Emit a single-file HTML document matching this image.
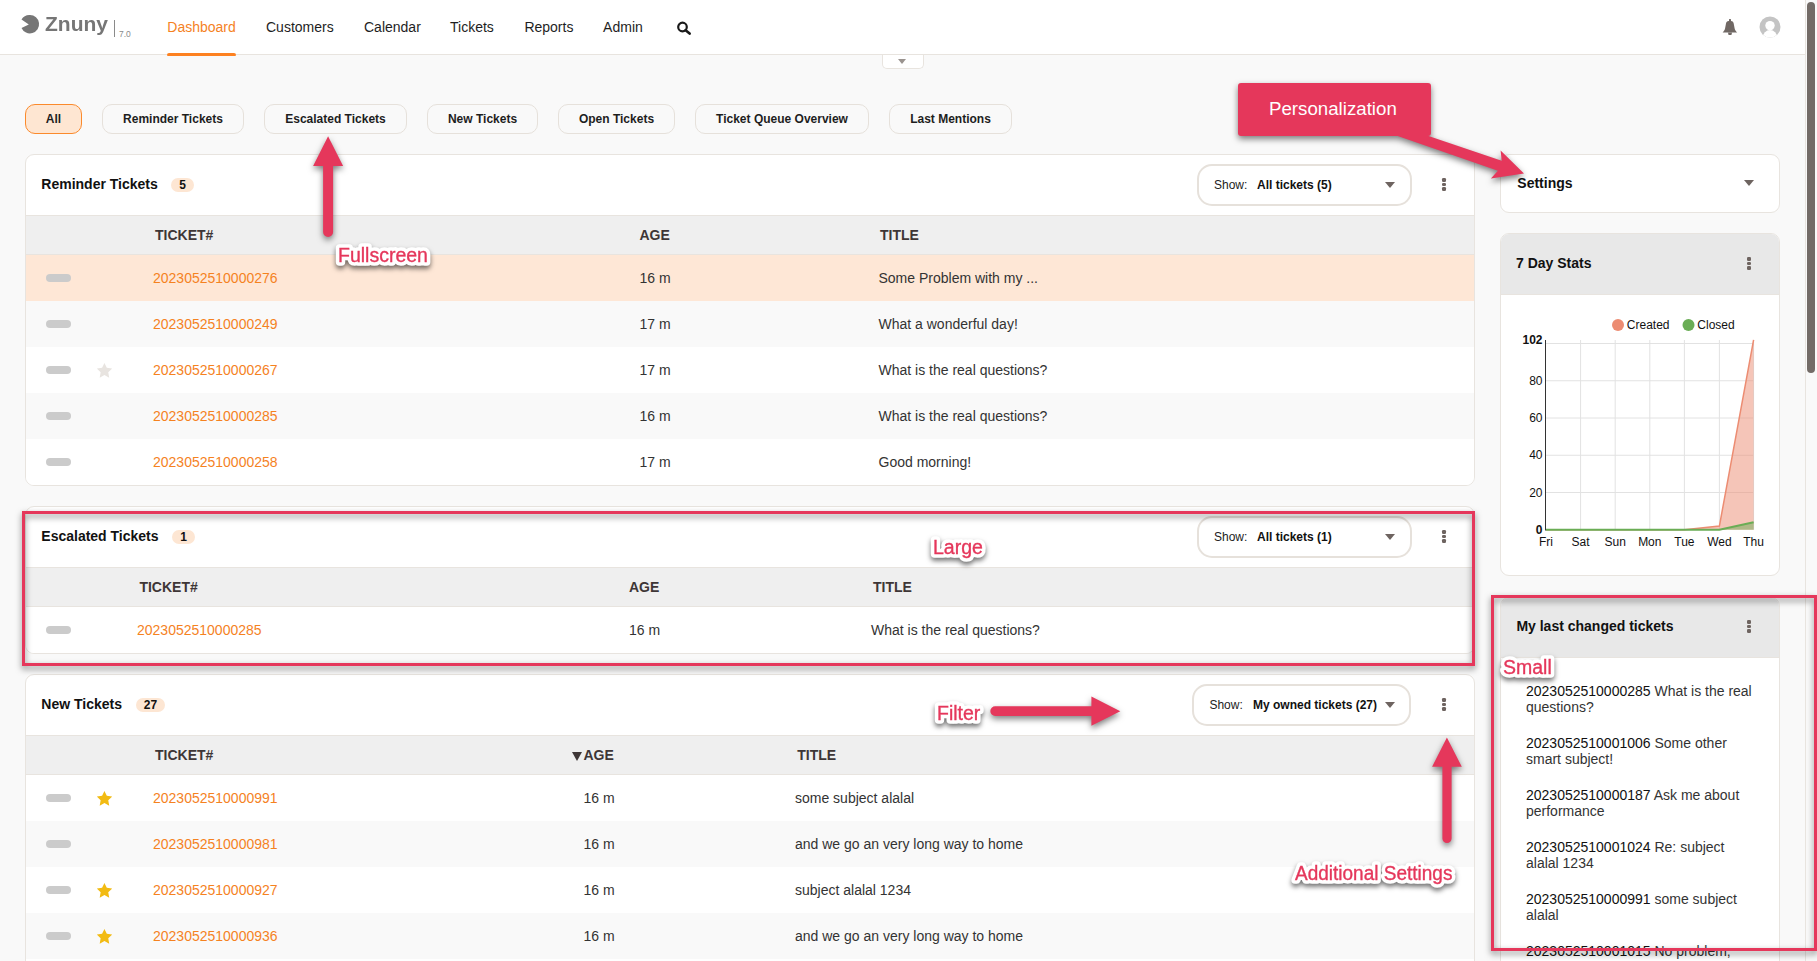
<!DOCTYPE html>
<html><head><meta charset="utf-8">
<style>
*{margin:0;padding:0;box-sizing:border-box}
html,body{width:1817px;height:961px;overflow:hidden;background:#f9f9f9;font-family:"Liberation Sans",sans-serif;color:#222}
.a{position:absolute}
.t{position:absolute;white-space:nowrap;line-height:1}
.pill{position:absolute;top:104px;height:30px;border:1px solid #e6e1db;border-radius:10px;font-size:12px;font-weight:bold;color:#1e1e1e;line-height:28px;text-align:center;background:#f9f9f9;white-space:nowrap}
.box{position:absolute;background:#fff;border:1px solid #e8e4df;border-radius:9px;overflow:hidden}
.badge{position:absolute;height:14px;border-radius:7px;background:#fde6d3;font-size:12px;font-weight:bold;line-height:14px;text-align:center;color:#111}
.row{position:absolute;height:46px}
.ind{position:absolute;width:25px;height:8px;border-radius:4px;background:#cbcbcb}
.dd{position:absolute;height:42px;border:2px solid #e6e1db;border-radius:15px;background:#fff}
.dots{position:absolute;width:4px;height:13px}
.dots i{position:absolute;left:0;width:4px;height:3.6px;border-radius:1.3px;background:#6e6460}
.tri{position:absolute;width:0;height:0;border-left:5.5px solid transparent;border-right:5.5px solid transparent;border-top:6px solid #6e6460}
</style></head><body>
<div class="a" style="left:0;top:0;width:1805px;height:55px;background:#fff;border-bottom:1px solid #e8e4df"></div>
<svg class="a" style="left:0;top:0" width="140" height="54">
<path d="M30,15 A9.2,9.2 0 1 1 21.5,28 L28.8,24.6 L21.5,19.5 A9.2,9.2 0 0 1 30,15 Z" fill="#767676"/>
</svg>
<div class="t" style="left:44.5px;top:13.5px;font-size:20px;font-weight:bold;color:#767676;transform:scaleX(1.05);transform-origin:0 0;letter-spacing:0px">Znuny</div>
<div class="a" style="left:114px;top:20px;width:1px;height:17px;background:#8a8a8a"></div>
<div class="t " style="left:119px;top:29.80px;font-size:8.5px;color:#8a8a8a">7.0</div>
<div class="t " style="left:167.3px;top:19.85px;font-size:14px;color:#f5821f">Dashboard</div>
<div class="t " style="left:266px;top:19.85px;font-size:14px;color:#1e1e1e">Customers</div>
<div class="t " style="left:364px;top:19.85px;font-size:14px;color:#1e1e1e">Calendar</div>
<div class="t " style="left:450px;top:19.85px;font-size:14px;color:#1e1e1e">Tickets</div>
<div class="t " style="left:524.4px;top:19.85px;font-size:14px;color:#1e1e1e">Reports</div>
<div class="t " style="left:603.1px;top:19.85px;font-size:14px;color:#1e1e1e">Admin</div>
<div class="a" style="left:167px;top:53px;width:69px;height:3px;border-radius:2px;background:#fd8120;border-radius:2px 2px 1px 1px"></div>
<svg class="a" style="left:676px;top:21px" width="16" height="14" viewBox="0 0 16 14">
<circle cx="6.5" cy="6" r="4.3" fill="none" stroke="#1a1a1a" stroke-width="2.2"/>
<line x1="9.6" y1="9.2" x2="13.6" y2="12.6" stroke="#1a1a1a" stroke-width="2.6" stroke-linecap="round"/>
</svg>
<svg class="a" style="left:1720px;top:17px" width="20" height="20" viewBox="0 0 20 20">
<path d="M9,2.6 C9,2 9.5,1.9 10,1.9 C10.5,1.9 11,2 11,2.6 L11,4 C12.7,4.1 13.4,4.9 13.7,6.6 L14.6,11.3 C14.9,13 15.8,14.3 17.1,15.6 L2.6,15.6 C3.9,14.3 4.8,13 5.1,11.3 L6,6.6 C6.3,4.9 7,4.1 8.7,4 L9,4 Z" fill="#706864"/>
<path d="M7.9,15.4 L12.1,15.4 L11.4,18 L8.6,18 Z" fill="#706864"/>
</svg>
<svg class="a" style="left:1758px;top:15px" width="24" height="24" viewBox="0 0 24 24">
<defs><clipPath id="avc"><circle cx="12" cy="12" r="10.5"/></clipPath></defs>
<circle cx="12" cy="12" r="10.5" fill="#c4c4c4"/>
<g clip-path="url(#avc)"><circle cx="12" cy="10.6" r="4.7" fill="#fff"/><ellipse cx="12" cy="22.5" rx="7.2" ry="7.6" fill="#fff"/></g>
</svg>
<div class="a" style="left:882px;top:55px;width:42px;height:14px;background:#fff;border:1px solid #e8e4df;border-top:none;border-radius:0 0 5px 5px"></div>
<div class="tri" style="left:898px;top:59px;border-left-width:4.5px;border-right-width:4.5px;border-top:5.5px solid #9a938f"></div>
<div class="pill" style="left:25px;width:57px;background:#fee6d2;border-color:#fb8a2c;">All</div>
<div class="pill" style="left:102px;width:142px;">Reminder Tickets</div>
<div class="pill" style="left:264px;width:143px;">Escalated Tickets</div>
<div class="pill" style="left:427px;width:111px;">New Tickets</div>
<div class="pill" style="left:558px;width:117px;">Open Tickets</div>
<div class="pill" style="left:695px;width:174px;">Ticket Queue Overview</div>
<div class="pill" style="left:889px;width:123px;">Last Mentions</div>
<div class="box" style="left:25px;top:154px;width:1450px;height:332px"><div class="a" style="left:-26px;top:-155px;width:1817px;height:961px">
<div class="t " style="left:41.3px;top:176.85px;font-size:14px;font-weight:bold;color:#111">Reminder Tickets</div>
<div class="badge" style="left:171px;top:178px;width:23px">5</div>
<div class="dd" style="left:1197px;top:164px;width:215px"></div>
<div class="t " style="left:1214px;top:178.84px;font-size:12px;color:#222">Show:</div>
<div class="t " style="left:1257px;top:178.84px;font-size:12px;font-weight:bold;color:#111">All tickets (5)</div>
<div class="tri" style="left:1384.5px;top:182px"></div>
<div class="dots" style="left:1442px;top:178px"><i style="top:0"></i><i style="top:4.7px"></i><i style="top:9.4px"></i></div>
<div class="a" style="left:26px;top:215px;width:1448px;height:40px;background:#efefef;border-top:1px solid #e8e4df;border-bottom:1px solid #e8e4df"></div>
<div class="t " style="left:155px;top:228.15px;font-size:14px;font-weight:bold;color:#3e3636">TICKET#</div>
<div class="t " style="left:639.5px;top:228.15px;font-size:14px;font-weight:bold;color:#3e3636">AGE</div>
<div class="t " style="left:880px;top:228.15px;font-size:14px;font-weight:bold;color:#3e3636">TITLE</div>
<div class="row" style="left:26px;top:255px;width:1448px;background:#fee7d6"></div>
<div class="ind" style="left:46px;top:274px"></div>
<div class="t " style="left:153px;top:270.95px;font-size:14px;color:#f5821f">2023052510000276</div>
<div class="t " style="left:639.5px;top:270.95px;font-size:14px;color:#333">16 m</div>
<div class="t " style="left:878.5px;top:270.95px;font-size:14px;color:#333">Some Problem with my ...</div>
<div class="row" style="left:26px;top:301px;width:1448px;background:#f9f9f9"></div>
<div class="ind" style="left:46px;top:320px"></div>
<div class="t " style="left:153px;top:316.95px;font-size:14px;color:#f5821f">2023052510000249</div>
<div class="t " style="left:639.5px;top:316.95px;font-size:14px;color:#333">17 m</div>
<div class="t " style="left:878.5px;top:316.95px;font-size:14px;color:#333">What a wonderful day!</div>
<div class="row" style="left:26px;top:347px;width:1448px;background:#fff"></div>
<div class="ind" style="left:46px;top:366px"></div>
<svg class="a" style="left:96.8px;top:362.5px" width="15" height="15" viewBox="0 0 15 15" style="overflow:visible"><path d="M7.45,0.00 L9.80,4.86 L15.15,5.60 L11.25,9.34 L12.21,14.65 L7.45,12.10 L2.69,14.65 L3.65,9.34 L-0.25,5.60 L5.10,4.86 Z" fill="#e8e4e0"/></svg>
<div class="t " style="left:153px;top:362.95px;font-size:14px;color:#f5821f">2023052510000267</div>
<div class="t " style="left:639.5px;top:362.95px;font-size:14px;color:#333">17 m</div>
<div class="t " style="left:878.5px;top:362.95px;font-size:14px;color:#333">What is the real questions?</div>
<div class="row" style="left:26px;top:393px;width:1448px;background:#f9f9f9"></div>
<div class="ind" style="left:46px;top:412px"></div>
<div class="t " style="left:153px;top:408.95px;font-size:14px;color:#f5821f">2023052510000285</div>
<div class="t " style="left:639.5px;top:408.95px;font-size:14px;color:#333">16 m</div>
<div class="t " style="left:878.5px;top:408.95px;font-size:14px;color:#333">What is the real questions?</div>
<div class="row" style="left:26px;top:439px;width:1448px;background:#fff"></div>
<div class="ind" style="left:46px;top:458px"></div>
<div class="t " style="left:153px;top:454.95px;font-size:14px;color:#f5821f">2023052510000258</div>
<div class="t " style="left:639.5px;top:454.95px;font-size:14px;color:#333">17 m</div>
<div class="t " style="left:878.5px;top:454.95px;font-size:14px;color:#333">Good morning!</div>
</div></div>
<div class="box" style="left:25px;top:506px;width:1450px;height:148px"><div class="a" style="left:-26px;top:-507px;width:1817px;height:961px">
<div class="t " style="left:41.3px;top:528.85px;font-size:14px;font-weight:bold;color:#111">Escalated Tickets</div>
<div class="badge" style="left:172px;top:530px;width:23px">1</div>
<div class="dd" style="left:1197px;top:516px;width:215px"></div>
<div class="t " style="left:1214px;top:530.84px;font-size:12px;color:#222">Show:</div>
<div class="t " style="left:1257px;top:530.84px;font-size:12px;font-weight:bold;color:#111">All tickets (1)</div>
<div class="tri" style="left:1384.5px;top:534px"></div>
<div class="dots" style="left:1442px;top:530px"><i style="top:0"></i><i style="top:4.7px"></i><i style="top:9.4px"></i></div>
<div class="a" style="left:26px;top:567px;width:1448px;height:40px;background:#efefef;border-top:1px solid #e8e4df;border-bottom:1px solid #e8e4df"></div>
<div class="t " style="left:139.4px;top:580.15px;font-size:14px;font-weight:bold;color:#3e3636">TICKET#</div>
<div class="t " style="left:629px;top:580.15px;font-size:14px;font-weight:bold;color:#3e3636">AGE</div>
<div class="t " style="left:873px;top:580.15px;font-size:14px;font-weight:bold;color:#3e3636">TITLE</div>
<div class="row" style="left:26px;top:607px;width:1448px;background:#fff"></div>
<div class="ind" style="left:46px;top:626px"></div>
<div class="t " style="left:137px;top:622.95px;font-size:14px;color:#f5821f">2023052510000285</div>
<div class="t " style="left:629px;top:622.95px;font-size:14px;color:#333">16 m</div>
<div class="t " style="left:871px;top:622.95px;font-size:14px;color:#333">What is the real questions?</div>
</div></div>
<div class="box" style="left:25px;top:674px;width:1450px;height:332px"><div class="a" style="left:-26px;top:-675px;width:1817px;height:961px">
<div class="t " style="left:41.3px;top:696.85px;font-size:14px;font-weight:bold;color:#111">New Tickets</div>
<div class="badge" style="left:136px;top:698px;width:29px">27</div>
<div class="dd" style="left:1192px;top:684px;width:219px"></div>
<div class="t " style="left:1209.4px;top:698.84px;font-size:12px;color:#222">Show:</div>
<div class="t " style="left:1253px;top:698.84px;font-size:12px;font-weight:bold;color:#111">My owned tickets (27)</div>
<div class="tri" style="left:1384.7px;top:702px"></div>
<div class="dots" style="left:1442px;top:698px"><i style="top:0"></i><i style="top:4.7px"></i><i style="top:9.4px"></i></div>
<div class="a" style="left:26px;top:735px;width:1448px;height:40px;background:#efefef;border-top:1px solid #e8e4df;border-bottom:1px solid #e8e4df"></div>
<div class="t " style="left:155px;top:748.15px;font-size:14px;font-weight:bold;color:#3e3636">TICKET#</div>
<div class="t " style="left:583.5px;top:748.15px;font-size:14px;font-weight:bold;color:#3e3636">AGE</div>
<div class="t " style="left:797.3px;top:748.15px;font-size:14px;font-weight:bold;color:#3e3636">TITLE</div>
<div class="row" style="left:26px;top:775px;width:1448px;background:#fff"></div>
<div class="ind" style="left:46px;top:794px"></div>
<svg class="a" style="left:96.8px;top:790.5px" width="15" height="15" viewBox="0 0 15 15" style="overflow:visible"><path d="M7.45,0.00 L9.80,4.86 L15.15,5.60 L11.25,9.34 L12.21,14.65 L7.45,12.10 L2.69,14.65 L3.65,9.34 L-0.25,5.60 L5.10,4.86 Z" fill="#f2bb13"/></svg>
<div class="t " style="left:153px;top:790.95px;font-size:14px;color:#f5821f">2023052510000991</div>
<div class="t " style="left:583.5px;top:790.95px;font-size:14px;color:#333">16 m</div>
<div class="t " style="left:795px;top:790.95px;font-size:14px;color:#333">some subject alalal</div>
<div class="row" style="left:26px;top:821px;width:1448px;background:#f9f9f9"></div>
<div class="ind" style="left:46px;top:840px"></div>
<div class="t " style="left:153px;top:836.95px;font-size:14px;color:#f5821f">2023052510000981</div>
<div class="t " style="left:583.5px;top:836.95px;font-size:14px;color:#333">16 m</div>
<div class="t " style="left:795px;top:836.95px;font-size:14px;color:#333">and we go an very long way to home</div>
<div class="row" style="left:26px;top:867px;width:1448px;background:#fff"></div>
<div class="ind" style="left:46px;top:886px"></div>
<svg class="a" style="left:96.8px;top:882.5px" width="15" height="15" viewBox="0 0 15 15" style="overflow:visible"><path d="M7.45,0.00 L9.80,4.86 L15.15,5.60 L11.25,9.34 L12.21,14.65 L7.45,12.10 L2.69,14.65 L3.65,9.34 L-0.25,5.60 L5.10,4.86 Z" fill="#f2bb13"/></svg>
<div class="t " style="left:153px;top:882.95px;font-size:14px;color:#f5821f">2023052510000927</div>
<div class="t " style="left:583.5px;top:882.95px;font-size:14px;color:#333">16 m</div>
<div class="t " style="left:795px;top:882.95px;font-size:14px;color:#333">subject alalal 1234</div>
<div class="row" style="left:26px;top:913px;width:1448px;background:#f9f9f9"></div>
<div class="ind" style="left:46px;top:932px"></div>
<svg class="a" style="left:96.8px;top:928.5px" width="15" height="15" viewBox="0 0 15 15" style="overflow:visible"><path d="M7.45,0.00 L9.80,4.86 L15.15,5.60 L11.25,9.34 L12.21,14.65 L7.45,12.10 L2.69,14.65 L3.65,9.34 L-0.25,5.60 L5.10,4.86 Z" fill="#f2bb13"/></svg>
<div class="t " style="left:153px;top:928.95px;font-size:14px;color:#f5821f">2023052510000936</div>
<div class="t " style="left:583.5px;top:928.95px;font-size:14px;color:#333">16 m</div>
<div class="t " style="left:795px;top:928.95px;font-size:14px;color:#333">and we go an very long way to home</div>
<div class="row" style="left:26px;top:959px;width:1448px;background:#fff"></div>
<div class="ind" style="left:46px;top:978px"></div>
<div class="t " style="left:153px;top:974.95px;font-size:14px;color:#f5821f">2023052510000950</div>
<div class="t " style="left:583.5px;top:974.95px;font-size:14px;color:#333">16 m</div>
<div class="t " style="left:795px;top:974.95px;font-size:14px;color:#333">and we go an very long way to home</div>
</div></div>
<div class="tri" style="left:571.5px;top:751.5px;border-left-width:5px;border-right-width:5px;border-top:9px solid #3e3636"></div>
<div class="box" style="left:1500px;top:154px;width:280px;height:59px"></div>
<div class="t " style="left:1517.3px;top:176.15px;font-size:14px;font-weight:bold;color:#111">Settings</div>
<div class="tri" style="left:1743.5px;top:180px"></div>
<div class="box" style="left:1500px;top:233px;width:280px;height:343px"></div>
<div class="a" style="left:1501px;top:234px;width:278px;height:61px;background:#e8e8e8;border-bottom:1px solid #e8e4df;border-radius:8px 8px 0 0"></div>
<div class="t " style="left:1516px;top:255.95px;font-size:14px;font-weight:bold;color:#111">7 Day Stats</div>
<div class="dots" style="left:1747px;top:257px"><i style="top:0"></i><i style="top:4.7px"></i><i style="top:9.4px"></i></div>
<div class="box" style="left:1500px;top:597px;width:280px;height:400px"></div>
<div class="a" style="left:1501px;top:598px;width:278px;height:60px;background:#e8e8e8;border-bottom:1px solid #e8e4df;border-radius:8px 8px 0 0"></div>
<div class="t " style="left:1516.4px;top:618.75px;font-size:14px;font-weight:bold;color:#111">My last changed tickets</div>
<div class="dots" style="left:1746.6px;top:620px"><i style="top:0"></i><i style="top:4.7px"></i><i style="top:9.4px"></i></div>
<div class="t " style="left:1526px;top:684.15px;font-size:14px;color:#333"><span style="color:#111">2023052510000285</span> What is the real</div>
<div class="t " style="left:1526px;top:699.65px;font-size:14px;color:#333">questions?</div>
<div class="t " style="left:1526px;top:736.15px;font-size:14px;color:#333"><span style="color:#111">2023052510001006</span> Some other</div>
<div class="t " style="left:1526px;top:751.65px;font-size:14px;color:#333">smart subject!</div>
<div class="t " style="left:1526px;top:788.15px;font-size:14px;color:#333"><span style="color:#111">2023052510000187</span> Ask me about</div>
<div class="t " style="left:1526px;top:803.65px;font-size:14px;color:#333">performance</div>
<div class="t " style="left:1526px;top:840.15px;font-size:14px;color:#333"><span style="color:#111">2023052510001024</span> Re: subject</div>
<div class="t " style="left:1526px;top:855.65px;font-size:14px;color:#333">alalal 1234</div>
<div class="t " style="left:1526px;top:892.15px;font-size:14px;color:#333"><span style="color:#111">2023052510000991</span> some subject</div>
<div class="t " style="left:1526px;top:907.65px;font-size:14px;color:#333">alalal</div>
<div class="t " style="left:1526px;top:944.15px;font-size:14px;color:#333"><span style="color:#111">2023052510001015</span> No problem,</div>
<svg class="a" style="left:0;top:0" width="1817" height="961"><line x1="1546" y1="492.5" x2="1753.6" y2="492.5" stroke="#e2e2e2" stroke-width="1"/><line x1="1546" y1="455.25" x2="1753.6" y2="455.25" stroke="#e2e2e2" stroke-width="1"/><line x1="1546" y1="418.0" x2="1753.6" y2="418.0" stroke="#e2e2e2" stroke-width="1"/><line x1="1546" y1="380.75" x2="1753.6" y2="380.75" stroke="#e2e2e2" stroke-width="1"/><line x1="1546" y1="343.5" x2="1753.6" y2="343.5" stroke="#e2e2e2" stroke-width="1"/><line x1="1580.6" y1="340" x2="1580.6" y2="529.75" stroke="#e2e2e2" stroke-width="1"/><line x1="1615.2" y1="340" x2="1615.2" y2="529.75" stroke="#e2e2e2" stroke-width="1"/><line x1="1649.8" y1="340" x2="1649.8" y2="529.75" stroke="#e2e2e2" stroke-width="1"/><line x1="1684.4" y1="340" x2="1684.4" y2="529.75" stroke="#e2e2e2" stroke-width="1"/><line x1="1719.4" y1="340" x2="1719.4" y2="529.75" stroke="#e2e2e2" stroke-width="1"/><line x1="1753.6" y1="340" x2="1753.6" y2="529.75" stroke="#e2e2e2" stroke-width="1"/><polygon points="1546,529.75 1546,529.75 1580.6,529.75 1615.2,529.75 1649.8,529.75 1684.4,529.75 1719.4,526.025 1753.6,339.775 1753.6,529.75" fill="#ec8c72" fill-opacity="0.5"/><polygon points="1546,529.75 1546,529.75 1580.6,529.75 1615.2,529.75 1649.8,529.75 1684.4,529.75 1719.4,529.75 1753.6,522.3 1753.6,529.75" fill="#6aad55" fill-opacity="0.5"/><polyline points="1546,529.75 1580.6,529.75 1615.2,529.75 1649.8,529.75 1684.4,529.75 1719.4,526.025 1753.6,339.775" fill="none" stroke="#ec8c72" stroke-width="1.5"/><polyline points="1546,529.75 1580.6,529.75 1615.2,529.75 1649.8,529.75 1684.4,529.75 1719.4,529.75 1753.6,522.3" fill="none" stroke="#6aad55" stroke-width="2"/><line x1="1545.5" y1="340" x2="1545.5" y2="530.5" stroke="#333" stroke-width="1"/><circle cx="1618" cy="325" r="6" fill="#ec8c72"/><circle cx="1688.5" cy="325" r="6" fill="#6aad55"/></svg>
<div class="t " style="left:1626.8px;top:318.64px;font-size:12px;color:#111">Created</div>
<div class="t " style="left:1697.3px;top:318.64px;font-size:12px;color:#111">Closed</div>
<div class="t " style="right:274.5px;top:334.14px;font-size:12px;color:#111;font-weight:bold">102</div>
<div class="t " style="right:274.5px;top:374.89px;font-size:12px;color:#111;">80</div>
<div class="t " style="right:274.5px;top:412.14px;font-size:12px;color:#111;">60</div>
<div class="t " style="right:274.5px;top:449.39px;font-size:12px;color:#111;">40</div>
<div class="t " style="right:274.5px;top:486.64px;font-size:12px;color:#111;">20</div>
<div class="t " style="right:274.5px;top:523.89px;font-size:12px;color:#111;font-weight:bold">0</div>
<div class="t" style="left:1516px;width:60px;text-align:center;top:536.09px;font-size:12px;color:#111">Fri</div>
<div class="t" style="left:1550.6px;width:60px;text-align:center;top:536.09px;font-size:12px;color:#111">Sat</div>
<div class="t" style="left:1585.2px;width:60px;text-align:center;top:536.09px;font-size:12px;color:#111">Sun</div>
<div class="t" style="left:1619.8px;width:60px;text-align:center;top:536.09px;font-size:12px;color:#111">Mon</div>
<div class="t" style="left:1654.4px;width:60px;text-align:center;top:536.09px;font-size:12px;color:#111">Tue</div>
<div class="t" style="left:1689.4px;width:60px;text-align:center;top:536.09px;font-size:12px;color:#111">Wed</div>
<div class="t" style="left:1723.6px;width:60px;text-align:center;top:536.09px;font-size:12px;color:#111">Thu</div>
<div class="a" style="left:1805px;top:0;width:12px;height:961px;background:#f9f9f9;border-left:1px solid #e8e4df"></div>
<div class="a" style="left:1807px;top:2px;width:8px;height:371px;border-radius:4px;background:#736b67"></div>
<svg class="a" style="left:0;top:0;filter:drop-shadow(0 3px 3px rgba(0,0,0,0.5))" width="1817" height="961"><rect x="23.5" y="512.5" width="1450" height="152" fill="none" stroke="#e5375b" stroke-width="3"/><rect x="1492.5" y="596.5" width="323" height="353" fill="none" stroke="#e5375b" stroke-width="3"/><path d="M328.1,136.3 L343.1,166 L333.1,166 L333.1,232 A5,5 0 0 1 323.1,232 L323.1,166 L313.1,166 Z" fill="#e5375b"/><path d="M1446.9,737.4 L1461.8,766.8 L1451.6,766.8 L1451.6,838.5 A4.6,4.6 0 0 1 1442.4,838.5 L1442.4,766.8 L1432.1,766.8 Z" fill="#e5375b"/><path d="M1120.3,711.2 L1091.4,725.8 L1091.4,716 L995.2,716 A4.9,4.9 0 0 1 995.2,706.2 L1091.4,706.2 L1091.4,696.4 Z" fill="#e5375b"/><path d="M1400,120 L1428.5,136 L1501.7,160.8 L1500.6,150.4 L1524,173.5 L1490.9,178.5 L1497.9,170.8 L1397.7,136 Z" fill="#e5375b"/><rect x="1238" y="83" width="193" height="53" rx="3" fill="#e5375b"/></svg>
<div class="t " style="left:1269.0px;top:100.07px;font-size:18.7px;color:#fff">Personalization</div>
<svg class="a" style="left:327.5px;top:232px;overflow:visible;filter:drop-shadow(0 3px 2.5px rgba(0,0,0,0.55))" width="10" height="10"><text x="10" y="30" font-family="Liberation Sans" font-size="19.5" transform="translate(10,30) scale(1.0,1) translate(-10,-30)" fill="#fff" stroke="#fff" stroke-width="7.5" stroke-linejoin="round">Fullscreen</text><text x="10" y="30" font-family="Liberation Sans" font-size="19.5" transform="translate(10,30) scale(1.0,1) translate(-10,-30)" fill="#e5375b" stroke="#e5375b" stroke-width="0.35">Fullscreen</text></svg>
<svg class="a" style="left:922.5px;top:523.6px;overflow:visible;filter:drop-shadow(0 3px 2.5px rgba(0,0,0,0.55))" width="10" height="10"><text x="10" y="30" font-family="Liberation Sans" font-size="19.5" transform="translate(10,30) scale(1.0,1) translate(-10,-30)" fill="#fff" stroke="#fff" stroke-width="7.5" stroke-linejoin="round">Large</text><text x="10" y="30" font-family="Liberation Sans" font-size="19.5" transform="translate(10,30) scale(1.0,1) translate(-10,-30)" fill="#e5375b" stroke="#e5375b" stroke-width="0.35">Large</text></svg>
<svg class="a" style="left:926.8px;top:690px;overflow:visible;filter:drop-shadow(0 3px 2.5px rgba(0,0,0,0.55))" width="10" height="10"><text x="10" y="30" font-family="Liberation Sans" font-size="19.5" transform="translate(10,30) scale(1.0,1) translate(-10,-30)" fill="#fff" stroke="#fff" stroke-width="7.5" stroke-linejoin="round">Filter</text><text x="10" y="30" font-family="Liberation Sans" font-size="19.5" transform="translate(10,30) scale(1.0,1) translate(-10,-30)" fill="#e5375b" stroke="#e5375b" stroke-width="0.35">Filter</text></svg>
<svg class="a" style="left:1284.5px;top:850.4px;overflow:visible;filter:drop-shadow(0 3px 2.5px rgba(0,0,0,0.55))" width="10" height="10"><text x="10" y="30" font-family="Liberation Sans" font-size="19.5" transform="translate(10,30) scale(0.975,1) translate(-10,-30)" fill="#fff" stroke="#fff" stroke-width="7.5" stroke-linejoin="round">Additional Settings</text><text x="10" y="30" font-family="Liberation Sans" font-size="19.5" transform="translate(10,30) scale(0.975,1) translate(-10,-30)" fill="#e5375b" stroke="#e5375b" stroke-width="0.35">Additional Settings</text></svg>
<svg class="a" style="left:1493px;top:644.3px;overflow:visible;filter:drop-shadow(0 3px 2.5px rgba(0,0,0,0.55))" width="10" height="10"><text x="10" y="30" font-family="Liberation Sans" font-size="19.5" transform="translate(10,30) scale(1.0,1) translate(-10,-30)" fill="#fff" stroke="#fff" stroke-width="7.5" stroke-linejoin="round">Small</text><text x="10" y="30" font-family="Liberation Sans" font-size="19.5" transform="translate(10,30) scale(1.0,1) translate(-10,-30)" fill="#e5375b" stroke="#e5375b" stroke-width="0.35">Small</text></svg>
</body></html>
